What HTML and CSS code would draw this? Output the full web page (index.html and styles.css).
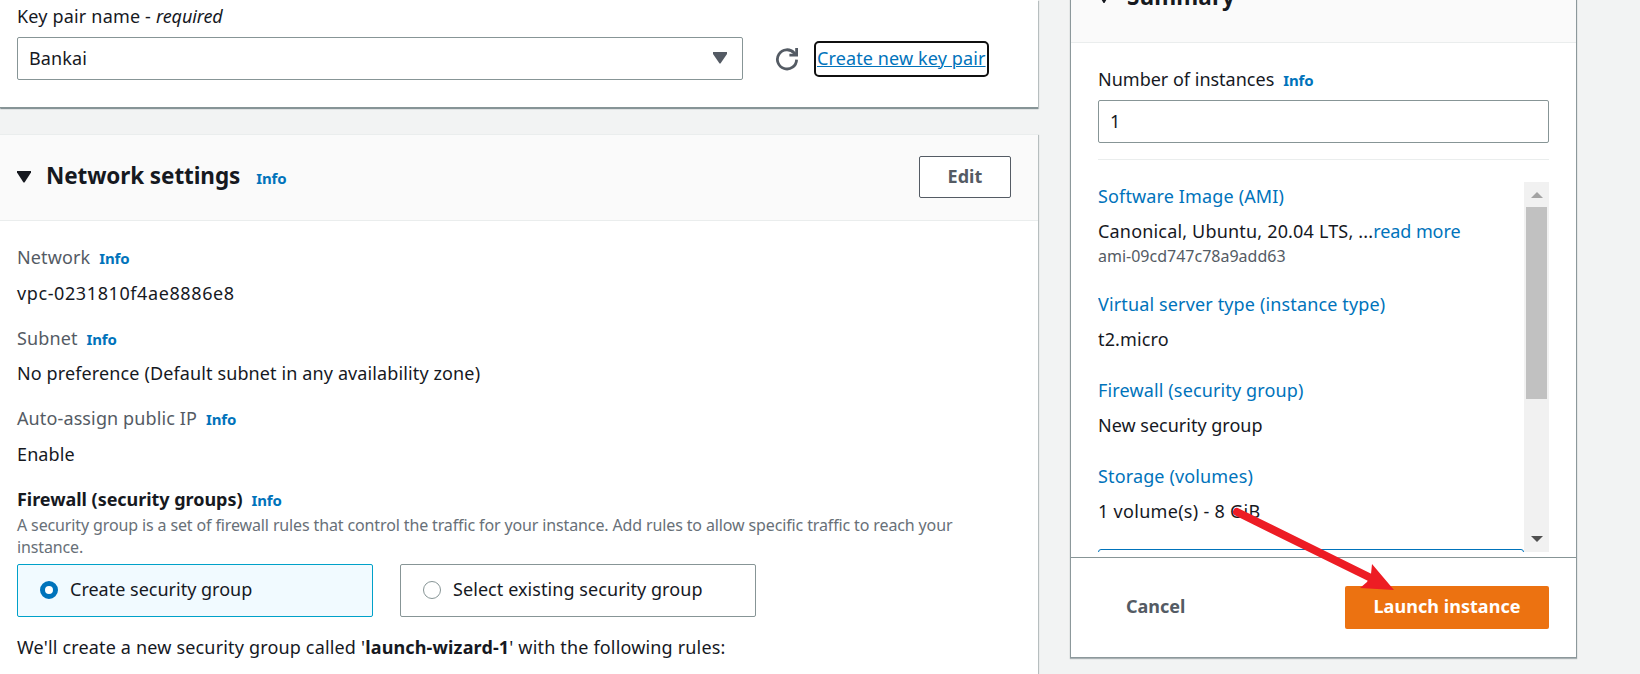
FILE: index.html
```
<!DOCTYPE html>
<html lang="en">
<head>
<meta charset="utf-8">
<title>Launch an instance</title>
<link rel="stylesheet" href="styles.css">
</head>
<body>
<div class="page">
  <main class="main">
    <section class="panel keypair">
      <div class="label"><span class="t-key">Key pair name - </span><em class="t-req">required</em></div>
      <div class="keypair-row">
        <div class="select"><span>Bankai</span>
          <svg width="14" height="12" viewBox="0 0 14 12"><path d="M0 0h14v2L7.5 11.5h-1L0 2z" fill="#545b64"/></svg>
        </div>
        <svg class="refresh" width="24" height="24" viewBox="0 0 24 24" fill="none" stroke="#545b64" stroke-width="2.8"><path d="M21.6 12.6A9.6 9.6 0 1 1 19.2 6L21 8.200"/><path d="M21.6 1v7.200h-7.200"/></svg>
        <a class="create-link"><span>Create new key pair</span></a>
      </div>
    </section>
    <section class="panel network">
      <header class="panel-header">
        <svg width="14" height="12" viewBox="0 0 14 12"><path d="M0 0h14v1.5L7.5 11.5h-1L0 1.5z" fill="#16191f"/></svg>
        <h2>Network settings</h2><a class="info">Info</a>
        <button class="btn edit">Edit</button>
      </header>
      <div class="network-body">
        <dl>
          <dt>Network<a class="info">Info</a></dt><dd class="t-vpc">vpc-0231810f4ae8886e8</dd>
          <dt>Subnet<a class="info">Info</a></dt><dd>No preference (Default subnet in any availability zone)</dd>
          <dt>Auto-assign public IP<a class="info">Info</a></dt><dd>Enable</dd>
        </dl>
        <div class="label strong">Firewall (security groups)<a class="info">Info</a></div>
        <p class="hint">A security group is a set of firewall rules that control the traffic for your instance. Add rules to allow specific traffic to reach your instance.</p>
        <div class="tiles">
          <div class="tile selected"><i class="radio"></i><span>Create security group</span></div>
          <div class="tile"><i class="radio"></i><span>Select existing security group</span></div>
        </div>
        <p class="note">We'll create a new security group called '<b>launch-wizard-1</b>' with the following rules:</p>
      </div>
    </section>
  </main>
  <aside class="summary">
    <header class="summary-header">
      <svg width="12" height="11" viewBox="0 0 12 11"><path d="M0 0h12v1.5L6.5 11h-1L0 1.5z" fill="#16191f"/></svg>
      <h2>Summary</h2>
    </header>
    <div class="summary-body">
      <div class="label count-label">Number of instances<a class="info">Info</a></div>
      <div class="input">1</div>
      <div class="scroll">
        <div class="scroll-content">
          <div class="item"><a>Software Image (AMI)</a><p class="t-ami">Canonical, Ubuntu, 20.04 LTS, ...<a class="more">read more</a></p><small>ami-09cd747c78a9add63</small></div>
          <div class="item"><a>Virtual server type (instance type)</a><p>t2.micro</p></div>
          <div class="item"><a>Firewall (security group)</a><p class="t-group">New security group</p></div>
          <div class="item"><a>Storage (volumes)</a><p class="t-vol">1 volume(s) - 8 GiB</p></div>
          <div class="alert"></div>
        </div>
        <div class="scrollbar">
          <svg width="12" height="6" viewBox="0 0 12 6"><path d="M0 6L6 0l6 6z" fill="#a3a3a3"/></svg>
          <div class="thumb"></div>
          <svg class="down" width="12" height="6" viewBox="0 0 12 6"><path d="M0 0h12L6 6z" fill="#505050"/></svg>
        </div>
      </div>
    </div>
    <footer class="summary-footer">
      <button class="cancel">Cancel</button>
      <button class="btn launch">Launch instance</button>
    </footer>
  </aside>
  <svg class="pointer" width="170" height="95" viewBox="0 0 170 95"><path d="M7 12L141 78" stroke="#ed1c24" stroke-width="8" stroke-linecap="round"/><path d="M142 64l22 26-34-2 7-6 4-8z" fill="#ed1c24"/></svg>
</div>
</body>
</html>
```
FILE: styles.css
```
* { box-sizing: border-box; }
body {
  margin: 0;
  background: #f2f3f3;
  color: #16191f;
  font: 18px/24px "Noto Sans", "Open Sans", sans-serif;
  letter-spacing: .12px;
}
h2, p, dl, dd { margin: 0; }
h2 { font-size: 22.5px; font-weight: 700; line-height: 30px; letter-spacing: -.1px; }
a { color: #0073bb; }
button { font: inherit; }

.page {
  position: relative;
  display: flex;
  align-items: flex-start;
  gap: 33px;
  width: 1640px;
  height: 674px;
  overflow: hidden;
}
.main { width: 1038px; display: flex; flex-direction: column; gap: 26px; }
.panel {
  background: #fff;
  box-shadow: 0 1px 1px rgba(0, 28, 36, .3), 1px 1px 1px rgba(0, 28, 36, .2);
}
.info {
  margin-left: 9px;
  font-size: 15px;
  font-weight: 700;
  line-height: 16px;
  letter-spacing: -.15px;
}

.keypair { height: 108px; padding: 4px 17px 0; border-bottom: 1px solid #879596; }
.keypair-row { display: flex; align-items: center; margin-top: 9px; }
.t-key { letter-spacing: .18px; white-space: pre; }
.t-req { letter-spacing: -.1px; }
.select {
  display: flex;
  align-items: center;
  justify-content: space-between;
  width: 726px;
  height: 43px;
  padding: 0 15px 1px 11px;
  border: 1px solid #879596;
  border-radius: 2px;
}
.refresh { margin-left: 32px; }
.create-link {
  display: flex;
  align-items: center;
  height: 36px;
  width: 175px;
  margin-left: 15px;
  padding: 0 0 2px 1px;
  border: 2.5px solid #101010;
  border-radius: 5px;
  text-decoration: underline;
  text-decoration-thickness: 1px;
  text-underline-offset: 1px;
  white-space: nowrap;
}

.panel-header {
  display: flex;
  align-items: center;
  height: 87px;
  padding: 0 27px 1px 17px;
  background: #fafafa;
  border-top: 1px solid #eaeded;
  border-bottom: 1px solid #eaeded;
}
.panel-header svg { margin-bottom: 1px; }
.panel-header h2 { margin: 0 0 2px 15px; }
.panel-header .info { margin: 1px 0 0 16px; }
.btn { border-radius: 2px; font-weight: 700; letter-spacing: .05px; }
.edit {
  width: 92px;
  height: 42px;
  margin-left: auto;
  padding: 0 0 2px;
  border: 1px solid #545b64;
  background: #fff;
  color: #545b64;
}

.network-body { height: 453px; padding: 24px 17px 0; }
dt { color: #545b64; height: 24px; }
dd { margin: 11.5px 0 21px; }
.t-vpc { letter-spacing: .6px; }
.strong { height: 24px; font-weight: 700; letter-spacing: -.04px; }
.hint {
  margin-top: 3px;
  color: #687078;
  font-size: 16px;
  line-height: 22px;
  letter-spacing: -.13px;
}
.tiles { display: flex; gap: 27px; margin-top: 6px; }
.tile {
  display: flex;
  align-items: center;
  gap: 12px;
  width: 356px;
  height: 53px;
  padding-left: 22px;
  border: 1px solid #879596;
  border-radius: 2px;
}
.tile span { padding-bottom: 2px; letter-spacing: .07px; }
.tile.selected { background: #f1faff; border-color: #00a1c9; }
.radio { width: 18px; height: 18px; border: 1px solid #879596; border-radius: 50%; background: #fff; }
.selected .radio { border: 5.5px solid #0073bb; }
.tile.selected span { letter-spacing: 0; }
.note { margin-top: 18px; letter-spacing: .17px; }
.note b { letter-spacing: .15px; }

.summary {
  width: 505px;
  height: 657px;
  background: #fff;
  box-shadow: 0 0 0 1px rgba(0, 28, 36, .17), 0 1px 1px 1px rgba(0, 28, 36, .3);
}
.summary-header {
  display: flex;
  align-items: flex-start;
  height: 43px;
  background: #fafafa;
  border-bottom: 1px solid #eaeded;
}
.summary-header svg { margin: -8px 0 0 27px; }
.summary-header h2 { margin: -18px 0 0 17px; letter-spacing: .1px; }
.summary-body { height: 515px; padding: 24px 27px 0; border-bottom: 1px solid #879596; }
.count-label { height: 24px; letter-spacing: 0; }
.input {
  display: flex;
  align-items: center;
  height: 43px;
  margin-top: 9px;
  padding: 0 0 1px 11px;
  border: 1px solid #879596;
  border-radius: 2px;
}
.scroll {
  display: flex;
  height: 393px;
  margin-top: 16px;
  padding-top: 22px;
  border-top: 1px solid #eaeded;
}
.scroll-content { flex: 1; height: 370px; padding-top: 2px; overflow: hidden; }
.item { display: flex; flex-direction: column; margin-bottom: 27px; letter-spacing: .14px; }
.item:first-child { margin-bottom: 25px; }
.item p { margin-top: 11px; white-space: nowrap; }
.item .more { letter-spacing: -.1px; }
.item .t-ami { letter-spacing: .18px; }
.item .t-group { letter-spacing: 0; }
.item .t-vol { letter-spacing: .3px; }
.item small { margin-top: 2px; color: #545b64; font-size: 16px; line-height: 22px; letter-spacing: 0; }
.alert { height: 40px; margin-top: -1px; border: 1px solid #0073bb; border-radius: 3px; }
.scrollbar {
  display: flex;
  flex-direction: column;
  align-items: center;
  width: 25px;
  height: 370px;
  padding: 10px 0;
  background: #f1f1f1;
}
.thumb { width: 21px; height: 192px; margin-top: 9px; background: #c1c1c1; }
.down { margin-top: auto; }
.summary-footer { display: flex; align-items: center; justify-content: space-between; height: 99px; padding: 0 27px 0 55px; }
.cancel { padding: 0 0 3px; border: 0; background: none; color: #545b64; font-weight: 700; letter-spacing: 0; }
.launch { width: 204px; height: 43px; padding: 0 0 3px; border: 0; background: #ec7211; color: #fff; }
.pointer { position: absolute; left: 1230px; top: 500px; }
```
